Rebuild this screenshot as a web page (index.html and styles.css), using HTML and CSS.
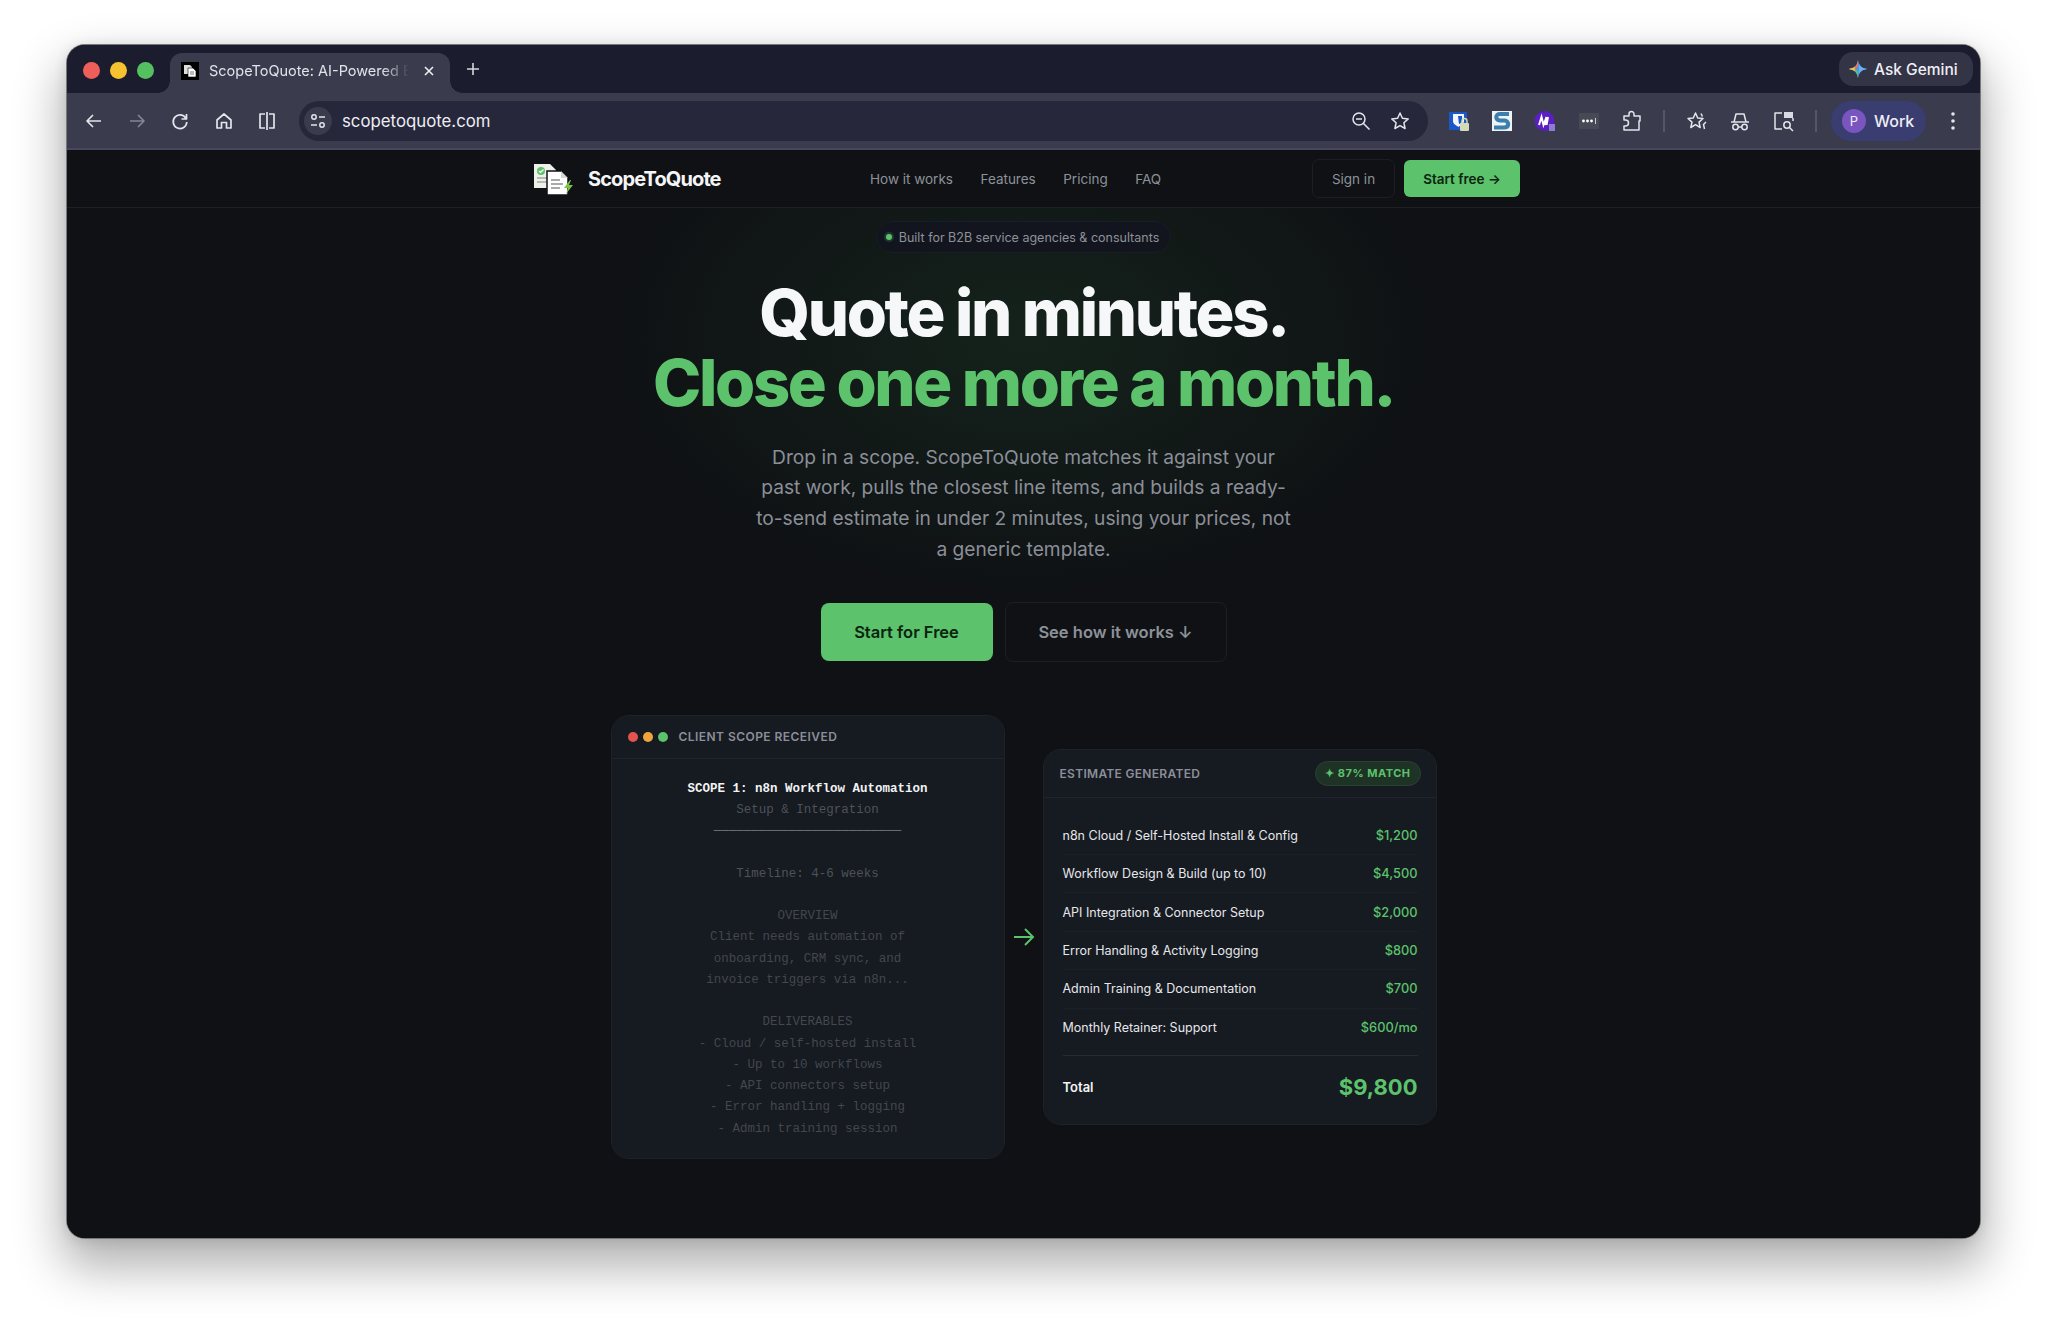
FILE: index.html
```html
<!DOCTYPE html>
<html lang="en">
<head>
<meta charset="utf-8">
<title>ScopeToQuote: AI-Powered Estimates</title>
<link rel="stylesheet" href="styles.css">
</head>
<body>
<div class="window">
  <div class="tabstrip">
    <div class="lights"><span class="light red"></span><span class="light yellow"></span><span class="light green"></span></div>
    <div class="tab">
      <span class="favicon">
        <svg viewBox="0 0 18 18" width="18" height="18"><rect width="18" height="18" fill="#000"/><path d="M3 3h6l2 2v7H3z" fill="#ddd"/><path d="M7 6h5l3 3v6H7z" fill="#fff" stroke="#000" stroke-width=".6"/><path d="M9 10h4M9 12h4" stroke="#777"/></svg>
      </span>
      <span class="tab-title">ScopeToQuote: AI-Powered Estimates</span>
      <svg class="tab-close" viewBox="0 0 12 12" width="12" height="12"><path d="M2 2l8 8M10 2l-8 8" stroke="#f0f0f4" stroke-width="1.6"/></svg>
    </div>
    <svg class="new-tab" viewBox="0 0 14 14" width="14" height="14"><path d="M7 1v12M1 7h12" stroke="#d8d8e0" stroke-width="1.6"/></svg>
    <div class="gemini">
      <svg viewBox="0 0 24 24" width="20" height="20"><defs><clipPath id="gemclip"><path d="M12 1c1 7 4 10 11 11-7 1-10 4-11 11-1-7-4-10-11-11 7-1 10-4 11-11z"/></clipPath></defs><g clip-path="url(#gemclip)"><rect width="24" height="24" fill="#4f8fe8"/><rect x="13" width="11" height="24" fill="#62b4ee"/><path d="M0 0h12v9l-3 3H0z" fill="#e8705c"/><path d="M0 12h9l3 3v9H0z" fill="#5fbf78"/><path d="M0 8h8v8H0z" fill="#edc94e"/></g></svg>
      <span>Ask Gemini</span>
    </div>
  </div>

  <div class="toolbar">
    <div class="nav-icons">
      <span class="tool"><svg viewBox="0 0 20 20" width="20" height="20"><path d="M17 10H3M9 4l-6 6 6 6" class="ico"/></svg></span>
      <span class="tool"><svg viewBox="0 0 20 20" width="20" height="20"><path d="M3 10h14M11 4l6 6-6 6" class="ico dim"/></svg></span>
      <span class="tool"><svg viewBox="0 0 20 20" width="20" height="20"><path d="M16 7.500A6.800 6.800 0 1 0 16.800 11M16.500 3v5h-5" class="ico"/></svg></span>
      <span class="tool"><svg viewBox="0 0 20 20" width="20" height="20"><path d="M3 9l7-6 7 6v8h-4.500v-5.500h-5V17H3z" class="ico"/></svg></span>
      <span class="tool"><svg viewBox="0 0 20 20" width="20" height="20"><path d="M8 3H3v14h5M12 3h5v14h-5M10 1v18" class="ico"/></svg></span>
    </div>
    <div class="omnibox">
      <span class="site-chip"><svg viewBox="0 0 18 18" width="18" height="18"><circle cx="5" cy="5" r="2.200" class="ico thin"/><path d="M10 5h6M2 13h6" class="ico thin"/><circle cx="13" cy="13" r="2.200" class="ico thin"/></svg></span>
      <span class="url">scopetoquote.com</span>
      <span class="omni-icons">
        <svg viewBox="0 0 20 20" width="20" height="20"><circle cx="8" cy="8" r="6" class="ico thin"/><path d="M5 8h6M12.500 12.500l6 6" class="ico thin"/></svg>
        <svg viewBox="0 0 20 20" width="20" height="20"><path d="M10 2l2.400 5.300 5.800.6-4.300 3.900 1.200 5.700-5.100-2.900-5.100 2.900 1.200-5.700L1.800 7.900l5.800-.6z" class="ico thin"/></svg>
      </span>
    </div>
    <div class="ext-icons">
      <span class="tool"><svg viewBox="0 0 22 22" width="22" height="22"><rect x="1" y="2" width="18" height="18" fill="#1c57c9"/><path d="M5 4h11v7c0 3-3 4-5.500 6C8 15 5 14 5 11z" fill="#f2f5fb"/><path d="M10 6h4v5c0 1.500-2 3-3 3z" fill="#1c57c9"/><rect x="12" y="13" width="9" height="8" rx="1" fill="#d6d9b8"/><path d="M14 13v-2a2.500 2.500 0 0 1 5 0v2" fill="none" stroke="#d6d9b8" stroke-width="1.400"/></svg></span>
      <span class="tool"><svg viewBox="0 0 22 22" width="22" height="22"><rect x="1" y="1" width="20" height="20" fill="#eef3f6"/><path d="M18 4H9C4 4 4 10 9 10.500h4.500c5 .5 5 7-.5 7H3" fill="none" stroke="#3c7fae" stroke-width="4"/></svg></span>
      <span class="tool"><svg viewBox="0 0 22 22" width="22" height="22"><circle cx="10.500" cy="11" r="10" fill="#5a1fc0"/><path d="M5 15l2.500-8 2 8 3-8-1.500 8M14 7l-1.500 8" fill="none" stroke="#fff" stroke-width="2"/><rect x="15" y="14" width="6" height="7" fill="#8f7ad6"/></svg></span>
      <span class="tool"><svg viewBox="0 0 22 22" width="22" height="22"><rect x="1" y="3" width="20" height="16" fill="#454a54"/><circle cx="5.500" cy="11" r="1.400" fill="#fff"/><circle cx="9.500" cy="11" r="1.400" fill="#fff"/><circle cx="13.500" cy="11" r="1.400" fill="#fff"/><path d="M17.500 8v6" stroke="#ccc"/></svg></span>
      <span class="tool"><svg viewBox="0 0 22 22" width="22" height="22"><path d="M3 6h5V4a2.500 2.500 0 0 1 5 0v2h6v5h-1v9H3v-4h1.500a2.500 2.500 0 0 0 0-6H3z" class="ico thin"/></svg></span>
      <span class="sep"></span>
      <span class="tool"><svg viewBox="0 0 22 22" width="22" height="22"><path d="M9.500 3l2.200 5 5.300.5-4 3.600 1.200 5.400-4.700-2.800-4.700 2.800 1.200-5.400-4-3.600 5.300-.5zM15 3.500l1.500 3M20 12l-2.500 2.500 1 4.500" class="ico thin"/></svg></span>
      <span class="tool"><svg viewBox="0 0 22 22" width="22" height="22"><path d="M2 12h18M5 12l2-8h8l2 8" class="ico thin"/><circle cx="6.500" cy="17" r="2.700" class="ico thin"/><circle cx="15.500" cy="17" r="2.700" class="ico thin"/><path d="M9 17h4" class="ico thin"/></svg></span>
      <span class="tool"><svg viewBox="0 0 22 22" width="22" height="22"><path d="M9 3H2v16h7" class="ico thin"/><rect x="11" y="2" width="9" height="6" fill="#d9dae2"/><path d="M20 8v3" class="ico thin"/><circle cx="14" cy="15" r="3.200" class="ico thin"/><path d="M16.500 17.500l3.500 3.500" class="ico thin"/></svg></span>
      <span class="sep"></span>
    </div>
    <div class="profile"><span class="avatar">P</span><span>Work</span></div>
    <svg class="kebab" viewBox="0 0 6 22" width="6" height="22"><circle cx="3" cy="4" r="1.800" fill="#e4e4ec"/><circle cx="3" cy="11" r="1.800" fill="#e4e4ec"/><circle cx="3" cy="18" r="1.800" fill="#e4e4ec"/></svg>
  </div>

  <main class="page">
    <header class="sitenav">
      <a class="brand">
        <svg class="brand-logo" viewBox="0 0 42 32" width="42" height="32">
          <path d="M1 1h16l6 6v18H1z" fill="#eef0ea"/>
          <circle cx="8" cy="8" r="4" fill="#5cc26c"/>
          <path d="M6 8l1.500 1.500L10.500 6.500" stroke="#fff" fill="none" stroke-width="1.200"/>
          <path d="M4 15h10M4 19h10" stroke="#a6a8a2" stroke-width="1.500"/>
          <path d="M14 8h14l7 7v17H14z" fill="#fff" stroke="#0f1114" stroke-width="1.500"/>
          <path d="M28 8v7h7" fill="#d6d8d2"/>
          <path d="M18 17h9M18 21h12M18 25h9" stroke="#8d8f8a" stroke-width="1.500"/>
          <path d="M37 17l-6 8h4l-2 6 7-9h-4l2-5z" fill="#7cc24a"/>
        </svg>
        <span class="brand-name">ScopeToQuote</span>
      </a>
      <nav class="links"><a>How it works</a><a>Features</a><a>Pricing</a><a>FAQ</a></nav>
      <div class="actions"><a class="signin">Sign in</a><a class="startfree">Start free →</a></div>
    </header>

    <section class="hero">
      <div class="pill"><span class="pill-dot"></span>Built for B2B service agencies &amp; consultants</div>
      <h1 class="headline"><span class="line">Quote in minutes.</span><span class="line accent">Close one more a month.</span></h1>
      <p class="lede">Drop in a scope. ScopeToQuote matches it against your past work, pulls the closest line items, and builds a ready-to-send estimate in under 2 minutes, using your prices, not a generic template.</p>
      <div class="cta">
        <a class="btn-primary">Start for Free</a>
        <a class="btn-ghost">See how it works ↓</a>
      </div>

      <div class="demo">
        <article class="card">
          <div class="card-head">
            <span class="cdot c-red"></span><span class="cdot c-amber"></span><span class="cdot c-green"></span>
            <span class="card-label">CLIENT SCOPE RECEIVED</span>
          </div>
          <div class="scope">
            <div class="s-title">SCOPE 1: n8n Workflow Automation</div>
            <div class="s-sub">Setup &amp; Integration</div>
            <div class="s-rule">─────────────────────────</div>
            <div class="s-blank"></div>
            <div class="s-sub">Timeline: 4-6 weeks</div>
            <div class="s-blank"></div>
            <div>OVERVIEW</div>
            <div>Client needs automation of</div>
            <div>onboarding, CRM sync, and</div>
            <div>invoice triggers via n8n...</div>
            <div class="s-blank"></div>
            <div>DELIVERABLES</div>
            <div>- Cloud / self-hosted install</div>
            <div>- Up to 10 workflows</div>
            <div>- API connectors setup</div>
            <div>- Error handling + logging</div>
            <div>- Admin training session</div>
          </div>
        </article>

        <div class="flow-arrow"><svg viewBox="0 0 22 20" width="22" height="20"><path d="M1 10h19M12 2l8 8-8 8" fill="none" stroke="#5cc26c" stroke-width="2"/></svg></div>

        <article class="card">
          <div class="card-head est-head">
            <span class="card-label">ESTIMATE GENERATED</span>
            <span class="match">✦ 87% MATCH</span>
          </div>
          <div class="est">
            <div class="row"><span>n8n Cloud / Self-Hosted Install &amp; Config</span><b>$1,200</b></div>
            <div class="row"><span>Workflow Design &amp; Build (up to 10)</span><b>$4,500</b></div>
            <div class="row"><span>API Integration &amp; Connector Setup</span><b>$2,000</b></div>
            <div class="row"><span>Error Handling &amp; Activity Logging</span><b>$800</b></div>
            <div class="row"><span>Admin Training &amp; Documentation</span><b>$700</b></div>
            <div class="row last"><span>Monthly Retainer: Support</span><b>$600/mo</b></div>
            <div class="total"><span>Total</span><strong>$9,800</strong></div>
          </div>
        </article>
      </div>
    </section>
  </main>
</div>
</body>
</html>
```

FILE: styles.css
```css
* { box-sizing: border-box; }
html, body { margin: 0; height: 100%; }
body {
  background: #fff;
  padding: 45px 68px 89px 67px;
  font-family: Inter, "Liberation Sans", sans-serif;
  overflow: hidden;
}
a { text-decoration: none; color: inherit; }

.window {
  height: 1193px;
  display: flex;
  flex-direction: column;
  border-radius: 18px;
  overflow: hidden;
  background: #0f1114;
  box-shadow: 0 0 0 1px #77787c, 0 24px 48px 6px rgba(0, 0, 0, .3), 0 2px 14px rgba(0, 0, 0, .12);
}

/* Browser chrome */
.tabstrip {
  height: 48px;
  flex: none;
  display: flex;
  align-items: flex-end;
  background: #1b1c2d;
  padding-left: 16px;
  position: relative;
}
.lights { display: flex; gap: 10px; align-self: center; margin-top: 3px; width: 87px; }
.light { width: 17px; height: 17px; border-radius: 50%; }
.red { background: #ee5f5b; }
.yellow { background: #f6c232; }
.green { background: #55c05f; }

.tab {
  width: 280px;
  height: 40px;
  display: flex;
  align-items: center;
  padding: 0 15px 5px 11px;
  background: #3a3b4d;
  border-radius: 12px 12px 0 0;
  position: relative;
}
.tab::before, .tab::after {
  content: "";
  position: absolute;
  bottom: 0;
  width: 12px;
  height: 12px;
}
.tab::before { left: -12px; background: radial-gradient(circle at 0 0, transparent 11.500px, #3a3b4d 12px); }
.tab::after { right: -12px; background: radial-gradient(circle at 100% 0, transparent 11.500px, #3a3b4d 12px); }
.favicon { width: 18px; height: 18px; flex: none; display: flex; margin-right: 10px; }
.tab-title {
  flex: 1;
  min-width: 0;
  font-size: 14.500px;
  color: #e2e2ea;
  white-space: nowrap;
  overflow: hidden;
  -webkit-mask-image: linear-gradient(90deg, #000 85%, transparent 98%);
  mask-image: linear-gradient(90deg, #000 85%, transparent 98%);
}
.tab-close { flex: none; margin-left: 10px; }
.new-tab { align-self: center; margin: 0 0 0 16px; }

.gemini {
  margin-left: auto;
  margin-right: 7px;
  align-self: center;
  width: 134px;
  height: 34px;
  display: flex;
  align-items: center;
  gap: 6px;
  padding-left: 9px;
  border-radius: 14px;
  background: #333446;
  color: #eeeef4;
  font-size: 15.500px;
  font-weight: 500;
}

.toolbar {
  height: 57px;
  flex: none;
  display: flex;
  align-items: center;
  background: #3a3b4d;
  border-bottom: 2px solid #47475f;
  padding: 0 0 0 5px;
}
.tool { width: 43.300px; display: flex; justify-content: center; align-items: center; flex: none; }
.ico { fill: none; stroke: #e4e4ec; stroke-width: 1.700; stroke-linejoin: round; }
.ico.dim { stroke: #83849a; }
.ico.thin { stroke-width: 1.500; }
.nav-icons { display: flex; width: 227px; }
.omnibox {
  width: 1129px;
  height: 40px;
  flex: none;
  display: flex;
  align-items: center;
  background: #26273b;
  border-radius: 20px;
  padding: 0 18px 0 5px;
}
.site-chip {
  width: 28px;
  height: 28px;
  border-radius: 50%;
  background: #3a3b4d;
  display: flex;
  align-items: center;
  justify-content: center;
  margin-right: 10px;
}
.url { color: #eeeef4; font-size: 16.800px; }
.omni-icons { margin-left: auto; display: flex; gap: 19px; }
.ext-icons { display: flex; align-items: center; margin-left: 9px; width: 385px; }
.sep { width: 2px; height: 22px; background: #55566a; flex: none; margin: 0 10px; }
.profile {
  width: 95px;
  height: 40px;
  flex: none;
  margin-left: 9px;
  border-radius: 20px;
  background: #3a3d70;
  display: flex;
  align-items: center;
  gap: 8px;
  padding-left: 11px;
  color: #eeeef4;
  font-size: 16px;
  font-weight: 500;
}
.avatar {
  width: 24px;
  height: 24px;
  border-radius: 50%;
  background: #7a55c0;
  display: flex;
  align-items: center;
  justify-content: center;
  font-size: 13px;
  font-weight: 400;
}
.kebab { margin-left: 24px; flex: none; }

/* Page */
.page { flex: 1; display: flex; flex-direction: column; background: #0f1114; min-height: 0; }
.sitenav {
  height: 58px;
  flex: none;
  display: flex;
  align-items: center;
  padding: 0 460px 0 466px;
  border-bottom: 1px solid #1d2025;
}
.brand { display: flex; align-items: center; gap: 13px; width: 337px; flex: none; }
.brand-logo { flex: none; }
.brand-name { font-size: 20px; font-weight: 700; color: #f4f5f6; letter-spacing: -.9px; }
.links { display: flex; gap: 27.500px; font-size: 13.500px; color: #8d9199; }
.actions { margin-left: auto; display: flex; align-items: center; gap: 9px; }
.signin {
  width: 83px;
  height: 39px;
  display: flex;
  align-items: center;
  justify-content: center;
  border: 1px solid #1b1e23;
  border-radius: 7px;
  font-size: 13.500px;
  color: #8d9199;
}
.startfree {
  width: 116px;
  height: 37px;
  display: flex;
  align-items: center;
  justify-content: center;
  border-radius: 6px;
  background: #5cc26c;
  color: #0a2410;
  font-size: 13.500px;
  font-weight: 600;
}

.hero {
  flex: 1;
  display: flex;
  flex-direction: column;
  align-items: center;
  padding-top: 13px;
  background: radial-gradient(ellipse 420px 260px at 50% 130px, rgba(60, 160, 80, .12), transparent 100%);
}
.pill {
  height: 32px;
  display: flex;
  align-items: center;
  gap: 7px;
  padding: 0 11px 0 9px;
  border-radius: 16px;
  background: #13151e;
  border: 1px solid #1a1d26;
  font-size: 12.500px;
  color: #8d9199;
}
.pill-dot { width: 6px; height: 6px; border-radius: 50%; background: #5cc26c; box-shadow: 0 0 0 2px rgba(92, 194, 108, .2); }
.headline {
  margin: 25px 0 0;
  font-size: 65px;
  font-weight: 800;
  letter-spacing: -2.350px;
  color: #f6f7f8;
  text-align: center;
}
.line { display: block; height: 70.400px; line-height: 70.400px; white-space: nowrap; }
.accent { color: #5cc26c; }
.lede {
  width: 540px;
  margin: 23px 0 0;
  font-size: 19.200px;
  line-height: 30.700px;
  color: #8b8f98;
  text-align: center;
}
.cta { display: flex; align-items: center; gap: 12px; margin-top: 37px; }
.btn-primary, .btn-ghost {
  display: flex;
  align-items: center;
  justify-content: center;
  font-size: 16.500px;
  font-weight: 600;
  border-radius: 8px;
}
.btn-primary { width: 172px; height: 58px; background: #5cc26c; color: #0a2410; }
.btn-ghost { width: 222px; height: 60px; border: 1px solid #1c1f24; color: #8d9199; }

.demo { display: flex; align-items: center; margin-top: 53px; }
.card {
  width: 394px;
  background: #161a21;
  border: 1px solid #1e2229;
  border-radius: 18px;
  overflow: hidden;
}
.card-head {
  height: 43px;
  display: flex;
  align-items: center;
  padding-left: 16px;
  border-bottom: 1px solid #20242b;
}
.cdot { width: 10px; height: 10px; border-radius: 50%; margin-right: 5px; }
.c-red { background: #e5534f; }
.c-amber { background: #eda53c; }
.c-green { background: #5cc26c; }
.card-label { font-size: 12px; font-weight: 600; letter-spacing: .45px; color: #8b8f98; margin-left: 6px; }
.scope {
  padding: 20px 0 18px;
  font-family: "Liberation Mono", monospace;
  font-size: 12.500px;
  line-height: 21.250px;
  color: #43474e;
  text-align: center;
}
.scope div { white-space: pre; }
.s-title { color: #f2f3f4; font-weight: 700; }
.scope .s-sub { color: #4e5259; }
.scope .s-rule { color: #70747b; overflow: hidden; }
.s-blank { height: 21.250px; }
.flow-arrow { width: 38px; flex: none; display: flex; justify-content: center; }

.est-head { height: 48px; padding: 0 15px 0 10px; justify-content: space-between; }
.est-head .card-label { letter-spacing: .3px; }
.match {
  height: 25px;
  display: flex;
  align-items: center;
  padding: 0 9px;
  border-radius: 13px;
  background: #1f3226;
  border: 1px solid #2b4233;
  color: #5cc26c;
  font-size: 11px;
  font-weight: 700;
  letter-spacing: .5px;
}
.est { padding: 19px 18px 17px 19px; }
.row {
  height: 38.400px;
  display: flex;
  align-items: center;
  justify-content: space-between;
  font-size: 12.500px;
  color: #e6e7ea;
  border-bottom: 1px solid #1b1f26;
}
.row.last { border-bottom: 0; }
.row b { color: #5cc26c; font-weight: 500; font-size: 12.800px; }
.total {
  margin-top: 8px;
  padding-top: 12px;
  border-top: 1px solid #262a31;
  height: 52px;
  display: flex;
  align-items: center;
  justify-content: space-between;
  font-size: 13px;
  font-weight: 600;
  color: #f2f3f4;
}
.total strong { font-size: 22px; font-weight: 700; color: #5cc26c; }
```
